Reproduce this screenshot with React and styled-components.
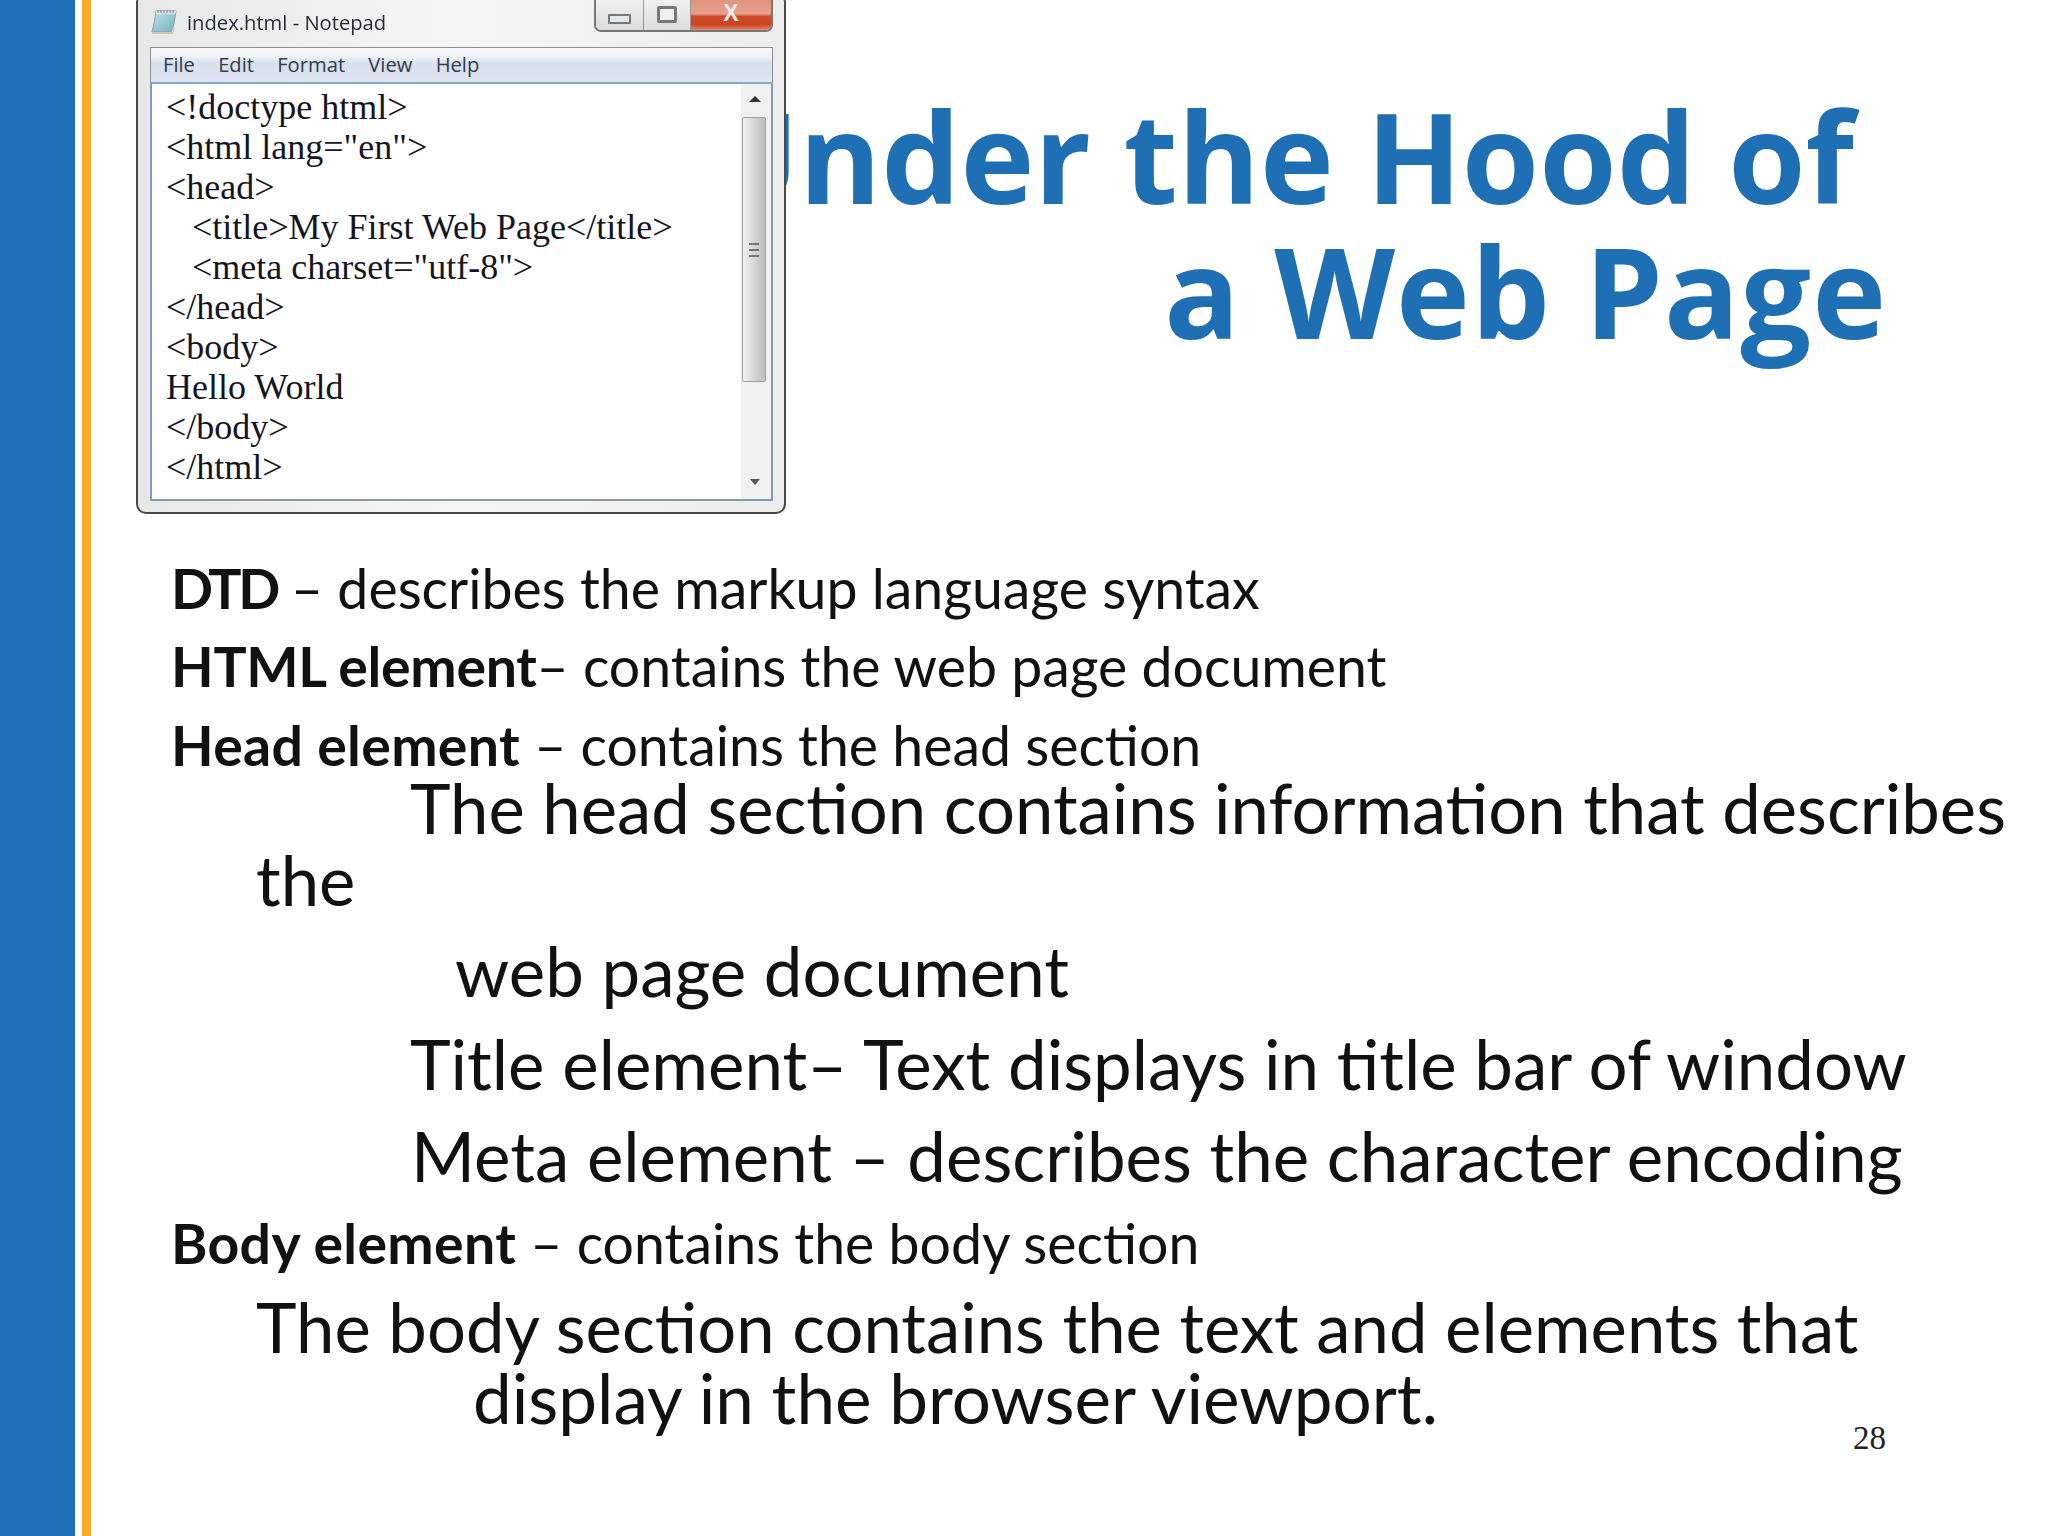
import React from "react"
import styled, { createGlobalStyle } from "styled-components"

const GlobalStyle = createGlobalStyle`
  html, body {
    margin: 0;
    padding: 0;
    background: #fff;
  }
`

const codeLines = [
  { text: "<!doctype html>" },
  { text: '<html lang="en">' },
  { text: "<head>" },
  { text: "<title>My First Web Page</title>", nested: true },
  { text: '<meta charset="utf-8">', nested: true },
  { text: "</head>" },
  { text: "<body>" },
  { text: "Hello World" },
  { text: "</body>" },
  { text: "</html>" },
]

const menuItems = ["File", "Edit", "Format", "View", "Help"]

const NotepadIcon = () => (
  <svg width="28" height="28" viewBox="0 0 28 28">
    <defs>
      <linearGradient id="pad" x1="0" y1="0" x2="1" y2="1">
        <stop offset="0" stopColor="#c4e2e6" />
        <stop offset="1" stopColor="#6fb2c2" />
      </linearGradient>
    </defs>
    <path d="M6 3h20c-1 7-2 14-4 21H2c2-7 3-14 4-21z" fill="url(#pad)" stroke="#8a9ba3" strokeWidth="1" />
    <path d="M6 3h20l-.5 3H5.6z" fill="#dfe6ea" />
    <path d="M8 2v3M11 2v3M14 2v3M17 2v3M20 2v3M23 2v3" stroke="#777" strokeWidth="1" />
    <path d="M2 25h20c1-2 1.500-4 2-6" fill="none" stroke="#cfc9b6" strokeWidth="2" />
  </svg>
)

const App = () => {
  return (
    <>
      <GlobalStyle />
      <Slide>
        <BlueBar />
        <OrangeBar />
        <Main>
          <Header>
            <Title>
              Under the Hood of
              <br />
              <SecondLine>a Web Page</SecondLine>
            </Title>
            <Window>
              <TitleBar>
                <NotepadIcon />
                <WindowName>index.html - Notepad</WindowName>
                <CaptionButtons>
                  <CaptionButton $w={48}>
                    <MinGlyph />
                  </CaptionButton>
                  <CaptionButton $w={47}>
                    <MaxGlyph />
                  </CaptionButton>
                  <CloseButton>X</CloseButton>
                </CaptionButtons>
              </TitleBar>
              <MenuBar>
                {menuItems.map((item) => (
                  <MenuItem key={item}>{item}</MenuItem>
                ))}
              </MenuBar>
              <Client>
                <Code>
                  {codeLines.map((line) => (
                    <CodeLine key={line.text} $nested={line.nested}>
                      {line.text}
                    </CodeLine>
                  ))}
                </Code>
                <ScrollBar>
                  <ArrowUp />
                  <Thumb>
                    <Grip />
                  </Thumb>
                  <ArrowDown />
                </ScrollBar>
              </Client>
            </Window>
          </Header>
          <Body>
            <Term>
              <Label $kern={-3.4}>DTD</Label> – describes the markup language syntax
            </Term>
            <Term>
              <Label $kern={-0.3}>HTML element</Label>– contains the web page document
            </Term>
            <Term>
              <Label $kern={0.35}>Head element</Label> – contains the head section
            </Term>
            <Wrapped>The head section contains information that describes the</Wrapped>
            <Detail $indent={284} $top={17}>web page document</Detail>
            <Detail $indent={239} $top={17}>Title element– Text displays in title bar of window</Detail>
            <Detail $indent={240} $top={16}>Meta element – describes the character encoding</Detail>
            <Term $top={10}>
              <Label $kern={0.35}>Body element</Label> – contains the body section
            </Term>
            <Closing>
              The body section contains the text and elements that
              <br />
              <ClosingSecond>display in the browser viewport.</ClosingSecond>
            </Closing>
          </Body>
        </Main>
        <PageNumber>28</PageNumber>
      </Slide>
    </>
  )
}

const Slide = styled.div`
  position: relative;
  display: flex;
  width: 2048px;
  height: 1536px;
  overflow: hidden;
  background: #fff;
`

const BlueBar = styled.div`
  flex: 0 0 75px;
  margin-right: 7px;
  background: #1f70b8;
`

const OrangeBar = styled.div`
  flex: 0 0 9px;
  background: #fbaa2e;
`

const Main = styled.div`
  flex: 1;
  display: flex;
  flex-direction: column;
  min-width: 0;
`

const Header = styled.header`
  position: relative;
  height: 549px;
`

const Title = styled.h1`
  margin: 0;
  padding-top: 88px;
  padding-right: 194px;
  font-family: "Open Sans", sans-serif;
  font-size: 125px;
  font-weight: 700;
  line-height: 135px;
  color: #1f6fb5;
  text-align: right;
  white-space: nowrap;
`

const SecondLine = styled.span`
  position: relative;
  left: 33px;
  letter-spacing: 1px;
`

const Window = styled.div`
  position: absolute;
  top: -8px;
  left: 45px;
  box-sizing: border-box;
  display: flex;
  flex-direction: column;
  width: 650px;
  height: 522px;
  padding: 0 11px 11px 12px;
  border: 2px solid #4a4a4a;
  border-radius: 10px;
  background: linear-gradient(90deg, #e8e8e8, #f6f6f6 50%, #ececec);
  filter: blur(0.45px);
`

const TitleBar = styled.div`
  display: flex;
  align-items: center;
  height: 53px;
  flex: none;
  padding-top: 2px;
  box-sizing: border-box;
  color: #1c2a3a;
`

const WindowName = styled.span`
  margin-left: 9px;
  font-family: "Open Sans", sans-serif;
  font-size: 20.2px;
  white-space: nowrap;
`

const CaptionButtons = styled.div`
  display: flex;
  align-self: flex-start;
  height: 38px;
  margin: -2px 0 0 auto;
  border: 2px solid #777;
  border-top: 0;
  border-radius: 0 0 7px 7px;
  overflow: hidden;
  box-sizing: border-box;
`

const CaptionButton = styled.div`
  display: flex;
  align-items: center;
  justify-content: center;
  width: ${(p) => p.$w}px;
  padding-top: 8px;
  box-sizing: border-box;
  border-right: 1px solid #999;
  background: linear-gradient(#f4f4f4, #dcdcdc);
`

const MinGlyph = styled.div`
  width: 19px;
  height: 6px;
  margin-top: 6px;
  border: 2px solid #777;
  border-radius: 1px;
  background: #e4e8ec;
`

const MaxGlyph = styled.div`
  width: 14px;
  height: 11px;
  margin-top: -4px;
  border: 3px solid #777;
  border-radius: 2px;
  background: #eef0f2;
`

const CloseButton = styled.div`
  flex: 1;
  width: 80px;
  padding-top: 8px;
  text-align: center;
  font-family: "Liberation Sans", sans-serif;
  font-size: 23px;
  font-weight: 700;
  line-height: 22px;
  color: #f2ece8;
  background: linear-gradient(#e0907a 0, #e5a08c 55%, #cf4a28 62%, #cb4526 85%, #e08a70 100%);
`

const MenuBar = styled.div`
  display: flex;
  flex: none;
  gap: 23.2px;
  align-items: center;
  height: 37px;
  padding-left: 12px;
  padding-bottom: 2px;
  box-sizing: border-box;
  border: 1px solid #8f8f8f;
  border-bottom: 2px solid #86acc8;
  background: linear-gradient(#f6f7fa 0, #f1f2f6 25%, #d8e0ee 45%, #dee4f0 100%);
`

const MenuItem = styled.span`
  font-family: "Open Sans", sans-serif;
  font-size: 20.2px;
  color: #333c48;
`

const Client = styled.div`
  flex: 1;
  display: flex;
  min-height: 0;
  border: 2px solid #7f9db9;
  border-top: 0;
  background: #fff;
`

const Code = styled.div`
  flex: 1;
  padding: 3px 0 0 14px;
  font-family: "Liberation Serif", serif;
  font-size: 36px;
  line-height: 40px;
  color: #15151f;
  white-space: nowrap;
`

const CodeLine = styled.div`
  padding-left: ${(p) => (p.$nested ? 26 : 0)}px;
`

const ScrollBar = styled.div`
  display: flex;
  flex-direction: column;
  align-items: flex-start;
  flex: 0 0 30px;
  background: #f0f0f0;
`

const ArrowUp = styled.div`
  flex: none;
  width: 0;
  height: 0;
  margin: 12px 0 0 8px;
  border-left: 6px solid transparent;
  border-right: 6px solid transparent;
  border-bottom: 6px solid #333;
`

const ArrowDown = styled.div`
  flex: none;
  width: 0;
  height: 0;
  margin: auto 0 14px 9px;
  border-left: 5px solid transparent;
  border-right: 5px solid transparent;
  border-top: 6px solid #555;
`

const Thumb = styled.div`
  display: flex;
  align-items: center;
  justify-content: center;
  flex: none;
  width: 24px;
  height: 265px;
  margin: 15px 0 0 1px;
  box-sizing: border-box;
  border: 1px solid #a0a0a0;
  border-radius: 2px;
  background: linear-gradient(90deg, #f2f2f2, #d4d4d4 55%, #bdbdbd);
`

const Grip = styled.div`
  width: 10px;
  height: 10px;
  border-top: 2px solid #777;
  border-bottom: 2px solid #777;
  background: linear-gradient(#777, #777) center / 100% 2px no-repeat;
`

const Body = styled.div`
  display: flex;
  flex-direction: column;
  padding-left: 80px;
  font-family: Lato, sans-serif;
  color: #111;
`

const Term = styled.div`
  margin-top: ${(p) => p.$top || 0}px;
  font-size: 55.4px;
  line-height: 78.4px;
  white-space: nowrap;
`

const Label = styled.b`
  font-weight: 700;
  letter-spacing: ${(p) => p.$kern}px;
`

const Wrapped = styled.div`
  margin: -12px 0 0 85px;
  font-size: 68.8px;
  line-height: 72px;
  text-indent: 154px;
`

const Detail = styled.div`
  margin-top: ${(p) => p.$top}px;
  padding-left: ${(p) => p.$indent}px;
  font-size: 69px;
  line-height: 76px;
  white-space: nowrap;
`

const Closing = styled.div`
  margin: 8px 0 0 85px;
  font-size: 68.8px;
  line-height: 71px;
  white-space: nowrap;
`

const ClosingSecond = styled.span`
  margin-left: 217px;
  font-size: 69.2px;
`

const PageNumber = styled.div`
  position: absolute;
  top: 1418px;
  left: 1853px;
  font-family: "Liberation Serif", serif;
  font-size: 33px;
  line-height: 40px;
  color: #222;
`

export default App
